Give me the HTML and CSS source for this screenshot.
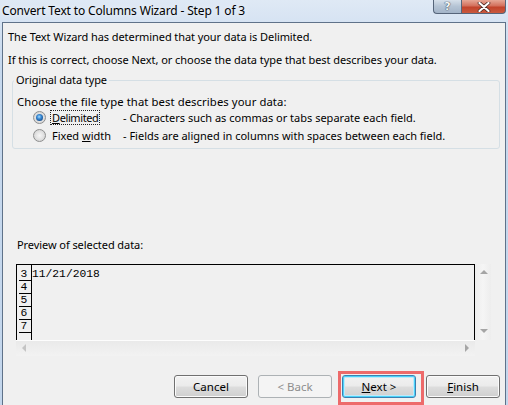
FILE: index.html
```html
<!DOCTYPE html>
<html>
<head>
<meta charset="utf-8">
<title>Convert Text to Columns Wizard</title>
<link rel="stylesheet" href="styles.css">
</head>
<body>
<div class="window">
  <div class="titlebar">
    <div class="title">Convert Text to Columns Wizard - Step 1 of 3</div>
    <div class="caption-btns">
      <div class="cap help">?</div>
      <div class="cap close">
        <svg width="14" height="10" viewBox="0 0 14 10">
          <path d="M2.5 1 L11.5 9 M11.5 1 L2.5 9" stroke="#4a2a24" stroke-width="3.6" stroke-linecap="round"/>
          <path d="M2.5 1 L11.5 9 M11.5 1 L2.5 9" stroke="#ffffff" stroke-width="2.2" stroke-linecap="round"/>
        </svg>
      </div>
    </div>
  </div>
  <div class="client">
    <p class="intro l1">The Text Wizard has determined that your data is Delimited.</p>
    <p class="intro l2">If this is correct, choose Next, or choose the data type that best describes your data.</p>
    <fieldset class="group">
      <legend>Original data type</legend>
      <div class="choose">Choose the file type that best describes your data:</div>
      <div class="opt">
        <span class="radio checked"></span>
        <span class="opt-label"><span class="focus on"><u>D</u>elimited</span></span>
        <span class="opt-desc">- Characters such as commas or tabs separate each field.</span>
      </div>
      <div class="opt">
        <span class="radio"></span>
        <span class="opt-label"><span class="focus">Fixed <u>w</u>idth</span></span>
        <span class="opt-desc">- Fields are aligned in columns with spaces between each field.</span>
      </div>
    </fieldset>
    <div class="preview-label">Preview of selected data:</div>
    <div class="preview">
      <div class="pbox">
        <div class="nums">
          <div class="num">3</div>
          <div class="num">4</div>
          <div class="num">5</div>
          <div class="num">6</div>
          <div class="num">7</div>
          <div class="num"></div>
        </div>
        <div class="datacol">
          <div class="cell">11/21/2018</div>
        </div>
      </div>
      <div class="vscroll">
        <span class="arrow up"></span>
        <span class="arrow down"></span>
      </div>
      <div class="hscroll">
        <span class="arrow left"></span>
        <span class="arrow right"></span>
      </div>
    </div>
    <div class="buttons">
      <div class="btn">Cancel</div>
      <div class="btn disabled">&lt; Back</div>
      <div class="btn default"><u>N</u>ext &gt;<span class="hl"></span></div>
      <div class="btn"><u>F</u>inish</div>
    </div>
  </div>
</div>
</body>
</html>
```
FILE: styles.css
```css
html, body {
  margin: 0;
  padding: 0;
}
body {
  width: 508px;
  height: 405px;
  overflow: hidden;
  font-family: "Noto Sans", "Open Sans", sans-serif;
  font-size: 11px;
  color: #000;
  background: #c8daee;
}
.window {
  display: flex;
  flex-direction: column;
  height: 405px;
  background: linear-gradient(#dfe9f5, #c7d9ee 60px, #c3d6ec);
}
.titlebar {
  height: 22px;
  flex: none;
  display: flex;
  justify-content: space-between;
  align-items: flex-start;
}
.title {
  padding-left: 2px;
  line-height: 22px;
  font-size: 12px;
  letter-spacing: -0.15px;
  color: #000;
  text-shadow: 0 0 6px rgba(255,255,255,0.9);
}
.caption-btns {
  display: flex;
  margin-right: 2px;
}
.cap {
  height: 14px;
  box-sizing: border-box;
  border: 1px solid #56657a;
  border-top: none;
  display: flex;
  align-items: center;
  justify-content: center;
}
.help {
  width: 28px;
  border-right: none;
  border-bottom-left-radius: 4px;
  background: linear-gradient(#d6e0ea, #b4c3d4 50%, #a3b4c8);
  color: #f4f6f8;
  font-family: "DejaVu Sans", sans-serif;
  font-weight: bold;
  font-size: 11px;
  line-height: 12px;
  text-shadow: 0 0 1px #2c3a4c, 0 0 1px #2c3a4c;
}
.close {
  width: 45px;
  border-bottom-right-radius: 4px;
  background: linear-gradient(#e6a796, #d3705c 45%, #c2432b 55%, #c95a3f);
}
.client {
  flex: 1;
  margin: 0 2px;
  border: 1px solid #5f7289;
  border-bottom: none;
  background: #f0f0f0;
  display: flex;
  flex-direction: column;
}
.intro {
  margin: 0;
  padding-left: 5px;
  line-height: 14px;
  white-space: nowrap;
}
.l1 {
  margin-top: 7px;
  letter-spacing: -0.08px;
}
.l2 {
  margin-top: 9px;
  letter-spacing: -0.05px;
}
.group {
  margin: 6px 0 0 9px;
  width: 488px;
  box-sizing: border-box;
  padding: 0 0 4px 0;
  border: 1px solid #d5dfe5;
  border-radius: 3px;
  min-width: 0;
}
.group legend {
  margin-left: 1px;
  padding: 0 2px;
  line-height: 14px;
  letter-spacing: -0.1px;
}
.choose {
  margin-top: 8px;
  padding-left: 4px;
  line-height: 13px;
  font-size: 11.3px;
  letter-spacing: 0.08px;
}
.opt {
  display: flex;
  align-items: center;
  height: 18px;
  padding-left: 20px;
  white-space: nowrap;
}
.radio {
  position: relative;
  width: 13px;
  height: 13px;
  box-sizing: border-box;
  border-radius: 50%;
  border: 1px solid #8e8f8f;
  background: radial-gradient(circle at 50% 50%, #f6f6f6 0, #e4e4e4 45%, #c9c9c9 100%);
  flex: none;
}
.radio.checked::after {
  content: "";
  position: absolute;
  left: 2px;
  top: 2px;
  width: 7px;
  height: 7px;
  border-radius: 50%;
  background: radial-gradient(circle at 45% 40%, #a6dcff 0, #3d8ed8 35%, #0d3f7d 85%);
}
.opt-label {
  width: 77px;
  padding-left: 4px;
  box-sizing: border-box;
  flex: none;
}
.focus {
  display: inline-block;
  border: 1px dotted transparent;
  padding: 0 1px;
  line-height: 13px;
}
.focus.on {
  border-color: #222;
  letter-spacing: -0.4px;
}
.preview-label {
  margin-top: 89px;
  padding-left: 14px;
  line-height: 14px;
  letter-spacing: -0.07px;
}
.preview {
  margin: 12px 0 0 13px;
  display: grid;
  grid-template-columns: 459px 16px;
  grid-template-rows: 76px 16px;
}
.pbox {
  box-sizing: border-box;
  border: 1px solid #000;
  border-bottom: none;
  display: flex;
  overflow: hidden;
  background: #f0f0f0;
  font-family: "Liberation Mono", "Courier New", monospace;
  font-size: 11.3px;
}
.nums {
  width: 14px;
  border-right: 1px solid #000;
  padding-top: 3px;
  flex: none;
}
.num {
  height: 12px;
  line-height: 12px;
  border-bottom: 1px solid #000;
  margin-left: 2px;
  text-align: center;
  padding-right: 2px;
}
.datacol {
  flex: 1;
  padding-top: 3px;
}
.cell {
  height: 12px;
  line-height: 12px;
}
.vscroll {
  position: relative;
  background: linear-gradient(90deg, #ededed, #f5f5f5 50%, #ededed);
}
.hscroll {
  position: relative;
  border-top: 1px solid #fdfdfd;
  background: linear-gradient(#eaeaea, #f2f2f2);
}
.arrow {
  position: absolute;
  width: 0;
  height: 0;
  border: 4px solid transparent;
}
.arrow.up {
  left: 5px;
  top: 6px;
  border-bottom: 4px solid #a5a5a5;
  border-top: none;
}
.arrow.down {
  left: 5px;
  top: 65px;
  border-top: 4px solid #a5a5a5;
  border-bottom: none;
}
.arrow.left {
  left: 6px;
  top: 3px;
  border-right: 4px solid #c4c4c4;
  border-left: none;
}
.arrow.right {
  right: 6px;
  top: 3px;
  border-left: 4px solid #a5a5a5;
  border-right: none;
}
.buttons {
  margin-top: 19px;
  padding-right: 5px;
  display: flex;
  justify-content: flex-end;
  gap: 10px;
  font-size: 11.5px;
}
.btn {
  position: relative;
  width: 74px;
  height: 23px;
  box-sizing: border-box;
  border: 1px solid #707070;
  border-radius: 3px;
  background: linear-gradient(#f2f2f2 0%, #ebebeb 48%, #dddddd 52%, #cfcfcf 100%);
  box-shadow: inset 0 0 0 1px #fbfbfb;
  display: flex;
  align-items: center;
  justify-content: center;
  line-height: 14px;
}
.btn.disabled {
  border-color: #adb2b5;
  background: #f4f4f4;
  box-shadow: none;
  color: #8d8d8d;
}
.btn.default {
  border-color: #3c7fb1;
  box-shadow: inset 0 0 0 1px #4ad3f9, inset 0 0 0 2px #bfe9fb;
}
.hl {
  position: absolute;
  left: -5px;
  top: -5px;
  width: 86px;
  height: 34px;
  box-sizing: border-box;
  border: 3px solid #ed6a6a;
}
```
